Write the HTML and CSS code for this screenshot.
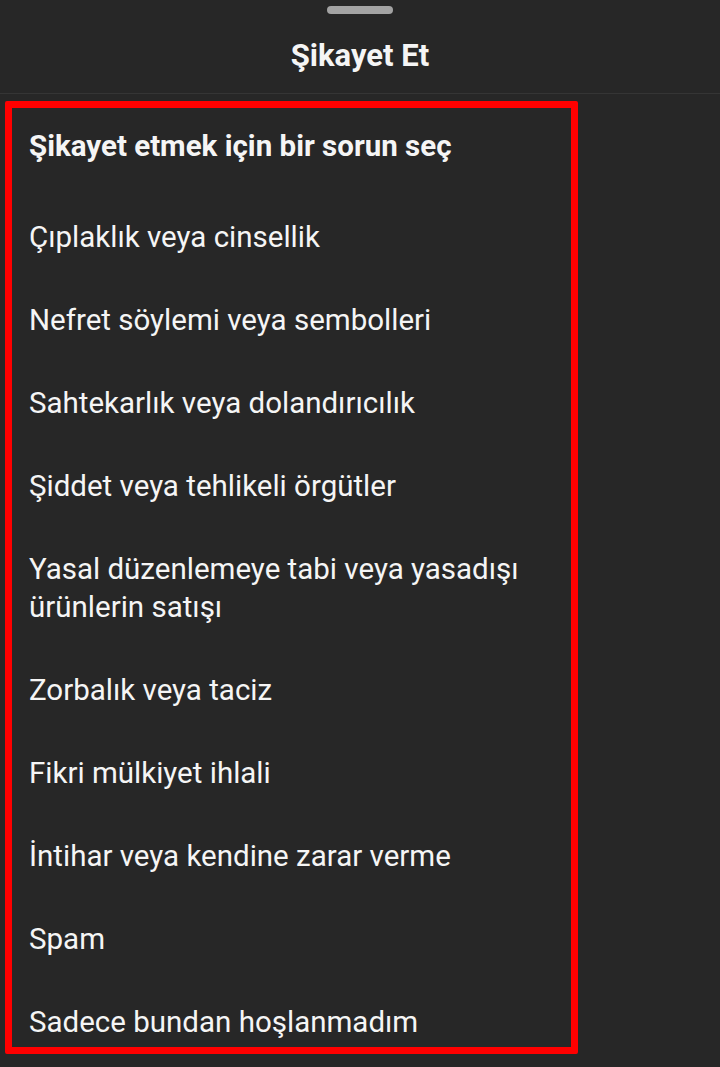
FILE: index.html
```html
<!DOCTYPE html>
<html lang="tr">
  <head>
    <meta charset="UTF-8" />
    <meta name="viewport" content="width=device-width, initial-scale=1.0" />
    <title>Şikayet Et</title>
    <link rel="stylesheet" href="styles.css">
  </head>
  <body>
    <div class="sheet">
      <div class="grabber"><span class="handle"></span></div>
      <h1 class="sheet-title">Şikayet Et</h1>

      <div class="report-box">
        <h2 class="report-heading">Şikayet etmek için bir sorun seç</h2>
        <ul class="report-list">
          <li>Çıplaklık veya cinsellik</li>
          <li>Nefret söylemi veya sembolleri</li>
          <li>Sahtekarlık veya dolandırıcılık</li>
          <li>Şiddet veya tehlikeli örgütler</li>
          <li>Yasal düzenlemeye tabi veya yasadışı ürünlerin satışı</li>
          <li>Zorbalık veya taciz</li>
          <li>Fikri mülkiyet ihlali</li>
          <li>İntihar veya kendine zarar verme</li>
          <li>Spam</li>
          <li>Sadece bundan hoşlanmadım</li>
        </ul>
      </div>
    </div>
  </body>
</html>
```

FILE: styles.css
```css
/* Bottom sheet for reporting a post */
body {
  margin: 0;
  background-color: #272727;
  color: #f5f5f5;
  font-family: Roboto, "Noto Sans", sans-serif;
}

.sheet {
  min-height: 100vh;
  background-color: #272727;
}

/* Drag handle at the top */
.grabber {
  display: flex;
  justify-content: center;
  padding-top: 6px;
}

.handle {
  display: block;
  width: 66px;
  height: 8px;
  border-radius: 4px;
  background: #a3a3a3;
}

.sheet-title {
  margin: 0;
  height: 80px;
  padding-top: 4px;
  display: flex;
  align-items: center;
  justify-content: center;
  font-size: 31px;
  font-weight: 700;
  border-bottom: 1px solid #353535;
  box-sizing: border-box;
}

/* --- Highlighted list of reasons --- */
.report-box {
  margin: 7px 0 0 5px;
  width: 573px;
  box-sizing: border-box;
  border: 7px solid #ff0000;
  border-radius: 2px;
  padding: 19px 17px 6px;
}

.report-heading {
  margin: 0 0 53px;
  font-size: 29.5px;
  line-height: 38px;
  font-weight: 700;
}

.report-list {
  list-style: none;
  margin: 0;
  padding: 0;
  display: flex;
  flex-direction: column;
  gap: 45px;
  font-size: 29.5px;
  line-height: 38px;
}
```
